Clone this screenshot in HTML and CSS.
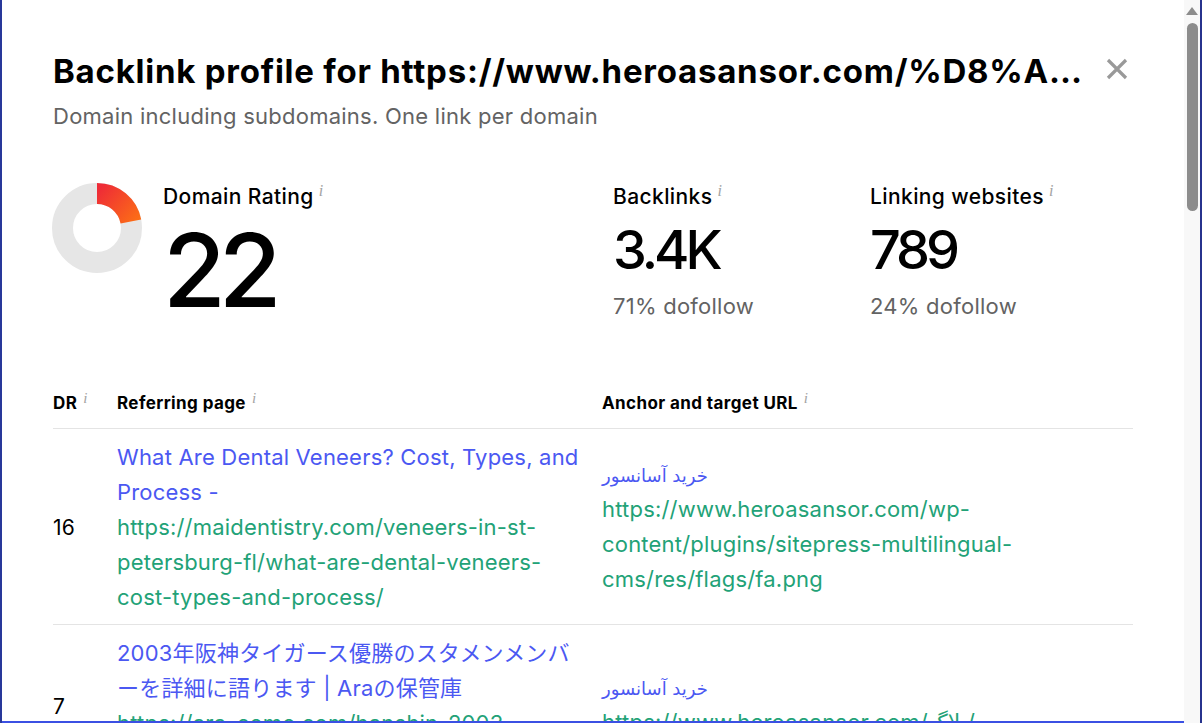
FILE: index.html
```html
<!DOCTYPE html>
<html lang="en">
<head>
<meta charset="utf-8">
<title>Backlink profile</title>
<link rel="stylesheet" href="styles.css">
</head>
<body>
<div class="edge-left"></div>
<main class="modal">
  <header class="modal-head">
    <div class="head-text">
      <h1 class="title">Backlink profile for https://www.heroasansor.com/%D8%AE%D8%B1%DB%8C%D8%AF-%D8%A2%D8%B3%D8%A7%D9%86%D8%B3%D9%88%D8%B1/</h1>
      <p class="subtitle">Domain including subdomains. One link per domain</p>
    </div>
    <button class="close" aria-label="Close">
      <svg width="24" height="24" viewBox="0 0 24 24"><path d="M3 3 L21 21 M21 3 L3 21" stroke="#999" stroke-width="3.2" stroke-linecap="butt" fill="none"/></svg>
    </button>
  </header>

  <section class="stats">
    <svg class="donut" width="90" height="90" viewBox="0 0 90 90">
      <defs>
        <linearGradient id="dr" x1="45" y1="8" x2="82" y2="40" gradientUnits="userSpaceOnUse">
          <stop offset="0" stop-color="#ee2b37"/>
          <stop offset="1" stop-color="#fc6c17"/>
        </linearGradient>
      </defs>
      <circle cx="45" cy="45" r="34.5" fill="none" stroke="#e6e6e6" stroke-width="21"/>
      <path d="M45 10.5 A34.5 34.5 0 0 1 78.89 38.54" fill="none" stroke="url(#dr)" stroke-width="21"/>
    </svg>
    <div class="stat stat-dr">
      <div class="stat-label">Domain Rating<sup class="info">i</sup></div>
      <div class="stat-big">22</div>
    </div>
    <div class="stat stat-bl">
      <div class="stat-label">Backlinks<sup class="info">i</sup></div>
      <div class="stat-num">3.4K</div>
      <div class="stat-sub">71% dofollow</div>
    </div>
    <div class="stat stat-lw">
      <div class="stat-label">Linking websites<sup class="info">i</sup></div>
      <div class="stat-num">789</div>
      <div class="stat-sub">24% dofollow</div>
    </div>
  </section>

  <table class="links">
    <colgroup>
      <col class="c-dr">
      <col class="c-ref">
      <col class="c-anchor">
    </colgroup>
    <thead>
      <tr>
        <th>DR<sup class="info sm">i</sup></th>
        <th>Referring page<sup class="info sm">i</sup></th>
        <th>Anchor and target URL<sup class="info sm">i</sup></th>
      </tr>
    </thead>
    <tbody>
      <tr>
        <td class="dr">16</td>
        <td class="ref">
          <a class="ref-title" href="#">What Are Dental Veneers? Cost, Types, and Process -</a>
          <a class="ref-url" href="#">https://maidentistry.com/veneers-in-st-petersburg-fl/what-are-dental-veneers-cost-types-and-process/</a>
        </td>
        <td class="anchor">
          <div class="anchor-text">خرید آسانسور</div>
          <a class="ref-url" href="#">https://www.heroasansor.com/wp-content/plugins/sitepress-multilingual-cms/res/flags/fa.png</a>
        </td>
      </tr>
      <tr>
        <td class="dr">7</td>
        <td class="ref">
          <a class="ref-title" href="#">2003年阪神タイガース優勝のスタメンメンバーを詳細に語ります | Araの保管庫</a>
          <a class="ref-url" href="#">https://ara-come.com/hanshin-2003-starting-member/</a>
        </td>
        <td class="anchor">
          <div class="anchor-text">خرید آسانسور</div>
          <a class="ref-url" href="#">https://www.heroasansor.com/بلاگ/</a>
        </td>
      </tr>
    </tbody>
  </table>
</main>
<div class="scrollbar">
  <span class="sb-arrow"></span>
  <span class="sb-thumb"></span>
</div>
<div class="edge-right"></div>
</body>
</html>
```

FILE: styles.css
```css
* { box-sizing: border-box; }

html, body {
  margin: 0;
  height: 723px;
  overflow: hidden;
  background: #fff;
}

body {
  display: flex;
  font-family: Inter, "Noto Sans CJK JP", "DejaVu Sans", sans-serif;
  color: #000;
}

.edge-left {
  width: 2px;
  flex: none;
  background: #28389a;
}

.edge-right {
  width: 2px;
  flex: none;
  background: #27338d;
}

.modal {
  flex: 1;
  min-width: 0;
  height: 723px;
  overflow: hidden;
  border-bottom: 2px solid #3b50e3;
  padding: 51px 51px 0 51px;
  background: #fff;
}

/* header */
.modal-head {
  display: flex;
  align-items: flex-start;
  gap: 14px;
}

.head-text {
  flex: 1;
  min-width: 0;
}

.title {
  margin: 0;
  font-size: 33px;
  line-height: 40px;
  font-weight: 700;
  letter-spacing: 0.76px;
  white-space: nowrap;
  overflow: hidden;
  text-overflow: ellipsis;
}

.subtitle {
  margin: 11px 0 0;
  font-size: 22px;
  line-height: 28px;
  letter-spacing: 0.25px;
  color: #636363;
}

.close {
  flex: none;
  width: 24px;
  height: 24px;
  margin: 6px 4px 0 0;
  padding: 0;
  border: 0;
  background: none;
  display: flex;
}

/* stats */
.stats {
  display: flex;
  align-items: flex-start;
  margin-top: 53px;
}

.donut {
  flex: none;
  display: block;
  margin-left: -1px;
}

.stat-dr {
  width: 450px;
  margin-left: 21px;
}

.stat-bl {
  width: 257px;
}

.stat-label {
  font-size: 21px;
  line-height: 28px;
  font-weight: 500;
  letter-spacing: 0.4px;
}

.info {
  font-family: "Liberation Serif", serif;
  font-style: italic;
  font-size: 16px;
  font-weight: 400;
  letter-spacing: 0;
  color: #a3a3a3;
  margin-left: 5px;
  vertical-align: 8px;
  line-height: 0;
}

.info.sm {
  font-size: 15px;
  margin-left: 6px;
  vertical-align: 6px;
}

.stat-big {
  margin-top: 8px;
  font-size: 102px;
  line-height: 102px;
  font-weight: 500;
  letter-spacing: -7px;
}

.stat-num {
  margin-top: 12px;
  font-size: 54px;
  line-height: 54px;
  font-weight: 500;
  letter-spacing: -4px;
}

.stat-sub {
  margin-top: 15px;
  font-size: 22px;
  line-height: 28px;
  letter-spacing: 0.25px;
  color: #636363;
}

/* table */
.links {
  width: 100%;
  margin-top: 70px;
  border-collapse: collapse;
  table-layout: fixed;
}

.c-dr { width: 64px; }
.c-ref { width: 485px; }
.c-anchor { width: 531px; }

.links th {
  text-align: left;
  font-size: 17px;
  line-height: 24px;
  font-weight: 700;
  letter-spacing: 0.4px;
  padding: 0 0 13px;
  border-bottom: 1px solid #e4e4e4;
  white-space: nowrap;
}

.links td {
  padding: 11px 0 9px;
  vertical-align: middle;
  border-bottom: 1px solid #e4e4e4;
  font-size: 22px;
  line-height: 35px;
  letter-spacing: 0.2px;
}

.links td.dr {
  font-size: 21px;
}

.links td.ref {
  padding-right: 18px;
}

.links td.anchor {
  padding-right: 91px;
}

.ref-title {
  display: block;
  color: #4b58f2;
  text-decoration: none;
}

.ref-url {
  display: block;
  color: #22a277;
  text-decoration: none;
}

.anchor-text {
  font-family: "DejaVu Sans", sans-serif;
  font-size: 18px;
  line-height: 33px;
  letter-spacing: 0;
  color: #4b58f2;
}

/* fake scrollbar */
.scrollbar {
  width: 16px;
  flex: none;
  height: 723px;
  background: #f8f8f8;
  display: flex;
  flex-direction: column;
  align-items: flex-start;
}

.sb-arrow {
  width: 0;
  height: 0;
  margin: 7px 0 0 2px;
  border-left: 6px solid transparent;
  border-right: 6px solid transparent;
  border-bottom: 8px solid #8c8c8c;
}

.sb-thumb {
  width: 11px;
  height: 188px;
  margin: 8px 0 0 3px;
  border-radius: 6px;
  background: #8c8c8c;
}
```
